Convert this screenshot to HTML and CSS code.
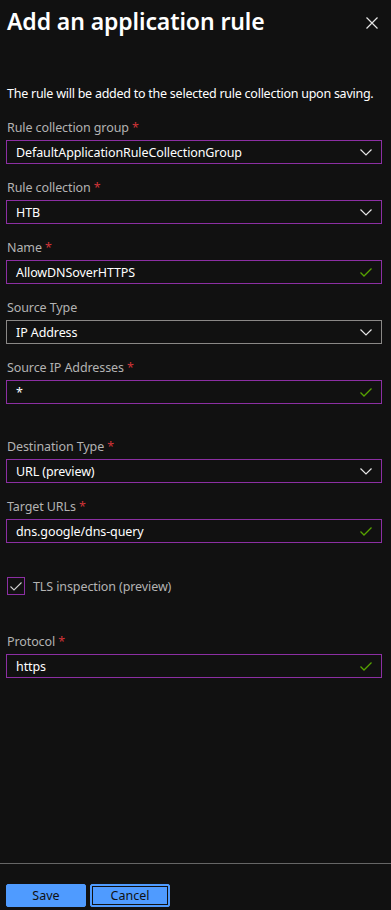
FILE: index.html
```html
<!DOCTYPE html>
<html lang="en">
<head>
    <meta charset="UTF-8">
    <meta name="viewport" content="width=device-width, initial-scale=1.0">
    <title>Add an application rule</title>
    <link rel="stylesheet" href="styles.css">
</head>
<body>
    <div class="panel">
        <div class="header">
            <h1 class="title">Add an application rule</h1>
            <button class="close" aria-label="Close">
                <svg width="12" height="12" viewBox="0 0 12 12"><path d="M0.5 0.5 L11.5 11.5 M11.5 0.5 L0.5 11.5" stroke="#e6e6e6" stroke-width="1.2" fill="none"/></svg>
            </button>
        </div>

        <div class="content">
            <p class="intro">The rule will be added to the selected rule collection upon saving.</p>

            <div class="field">
                <div class="label">Rule collection group <span class="req">*</span></div>
                <div class="box">
                    <span class="value">DefaultApplicationRuleCollectionGroup</span>
                    <svg class="chevron" width="12" height="7" viewBox="0 0 12 7"><path d="M0.5 0.5 L6 6 L11.5 0.5" stroke="#e6e6e6" stroke-width="1.2" fill="none"/></svg>
                </div>
            </div>

            <div class="field">
                <div class="label">Rule collection <span class="req">*</span></div>
                <div class="box">
                    <span class="value">HTB</span>
                    <svg class="chevron" width="12" height="7" viewBox="0 0 12 7"><path d="M0.5 0.5 L6 6 L11.5 0.5" stroke="#e6e6e6" stroke-width="1.2" fill="none"/></svg>
                </div>
            </div>

            <div class="field">
                <div class="label">Name <span class="req">*</span></div>
                <div class="box">
                    <span class="value">AllowDNSoverHTTPS</span>
                    <svg class="check" width="12" height="9" viewBox="0 0 12 9"><path d="M0.5 4.5 L4 8 L11.5 0.5" stroke="#57a300" stroke-width="1.3" fill="none"/></svg>
                </div>
            </div>

            <div class="field">
                <div class="label">Source Type</div>
                <div class="box plain">
                    <span class="value">IP Address</span>
                    <svg class="chevron" width="12" height="7" viewBox="0 0 12 7"><path d="M0.5 0.5 L6 6 L11.5 0.5" stroke="#e6e6e6" stroke-width="1.2" fill="none"/></svg>
                </div>
            </div>

            <div class="field spaced">
                <div class="label">Source IP Addresses <span class="req">*</span></div>
                <div class="box">
                    <span class="value">*</span>
                    <svg class="check" width="12" height="9" viewBox="0 0 12 9"><path d="M0.5 4.5 L4 8 L11.5 0.5" stroke="#57a300" stroke-width="1.3" fill="none"/></svg>
                </div>
            </div>

            <div class="field">
                <div class="label">Destination Type <span class="req">*</span></div>
                <div class="box">
                    <span class="value">URL (preview)</span>
                    <svg class="chevron" width="12" height="7" viewBox="0 0 12 7"><path d="M0.5 0.5 L6 6 L11.5 0.5" stroke="#e6e6e6" stroke-width="1.2" fill="none"/></svg>
                </div>
            </div>

            <div class="field">
                <div class="label">Target URLs <span class="req">*</span></div>
                <div class="box">
                    <span class="value">dns.google/dns-query</span>
                    <svg class="check" width="12" height="9" viewBox="0 0 12 9"><path d="M0.5 4.5 L4 8 L11.5 0.5" stroke="#57a300" stroke-width="1.3" fill="none"/></svg>
                </div>
            </div>

            <label class="checkbox-row">
                <span class="checkbox">
                    <svg width="12" height="9" viewBox="0 0 12 9"><path d="M0.5 4.5 L4 8 L11.5 0.5" stroke="#d0d0d0" stroke-width="1.1" fill="none"/></svg>
                </span>
                <span class="checkbox-text">TLS inspection (preview)</span>
            </label>

            <div class="field">
                <div class="label">Protocol <span class="req">*</span></div>
                <div class="box">
                    <span class="value">https</span>
                    <svg class="check" width="12" height="9" viewBox="0 0 12 9"><path d="M0.5 4.5 L4 8 L11.5 0.5" stroke="#57a300" stroke-width="1.3" fill="none"/></svg>
                </div>
            </div>
        </div>

        <div class="footer">
            <button class="btn">Save</button>
            <button class="btn focused">Cancel</button>
        </div>
    </div>
</body>
</html>
```

FILE: styles.css
```css
* {
    box-sizing: border-box;
}

body {
    margin: 0;
    background-color: #111111;
    color: #ffffff;
    font-family: "Noto Sans", "Open Sans", sans-serif;
    font-size: 12.5px;
    letter-spacing: -0.1px;
}

.panel {
    height: 910px;
    display: flex;
    flex-direction: column;
}

.header {
    display: flex;
    justify-content: space-between;
    align-items: flex-start;
    padding: 5px 13px 0 7px;
}

.title {
    margin: 0;
    font-size: 23px;
    font-weight: 600;
    line-height: 32px;
    letter-spacing: -0.1px;
}

.close {
    background: none;
    border: none;
    padding: 0;
    margin-top: 12px;
    width: 12px;
    height: 12px;
    display: flex;
}

.content {
    flex: 1;
    padding: 0 9px 0 6px;
}

.intro {
    margin: 48px 0 16px 1px;
    line-height: 18px;
    white-space: nowrap;
    letter-spacing: -0.25px;
}

.field {
    margin-bottom: 15px;
}

.field.spaced {
    margin-bottom: 34px;
}

.label {
    color: #b3b3b3;
    line-height: 18px;
    margin: 0 0 3px 1px;
}

.req {
    color: #d13438;
}

.box {
    height: 24px;
    border: 1px solid #8c2fa3;
    display: flex;
    align-items: center;
    justify-content: space-between;
    padding: 0 9px 0 9px;
}

.box.plain {
    border-color: #8a8886;
}

.value {
    color: #ffffff;
}

.checkbox-row {
    display: flex;
    align-items: center;
    gap: 8px;
    margin: 34px 0 38px 1px;
}

.checkbox {
    width: 18px;
    height: 18px;
    border: 1px solid #8c2fa3;
    display: flex;
    align-items: center;
    justify-content: center;
}

.checkbox-text {
    color: #b3b3b3;
}

.footer {
    border-top: 1px solid #666666;
    padding: 20px 6px 3px 6px;
    display: flex;
    gap: 4px;
}

.btn {
    width: 80px;
    height: 23px;
    background-color: #4f9bff;
    border: 1px solid #4f9bff;
    border-radius: 2px;
    color: #111111;
    font-family: "Noto Sans", "Open Sans", sans-serif;
    font-size: 12.5px;
    padding: 0;
}

.btn.focused {
    outline: 1px solid #111111;
    outline-offset: -3px;
}
```
